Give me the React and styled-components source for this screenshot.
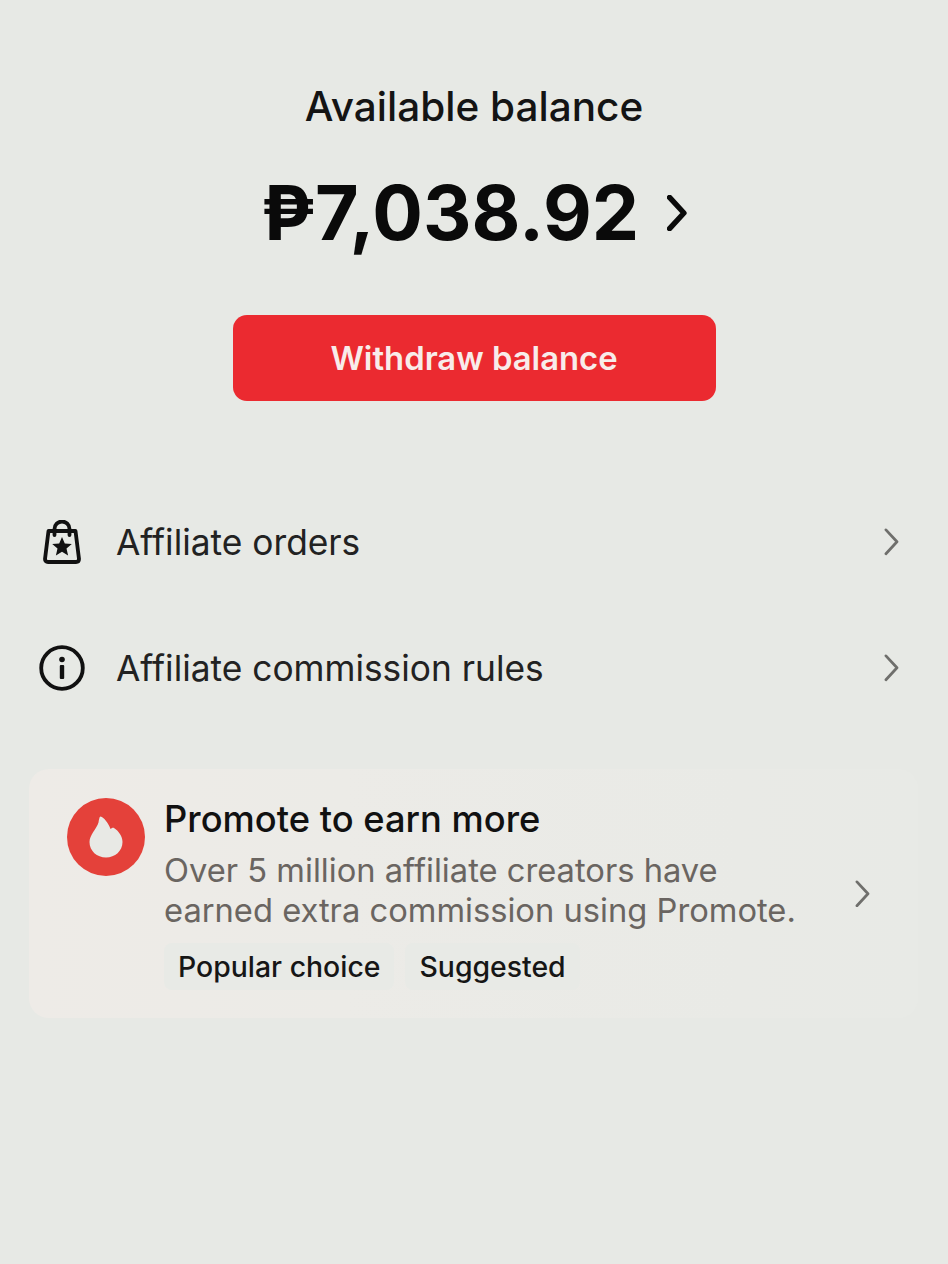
import React from 'react';
import styled, { createGlobalStyle } from 'styled-components';

const GlobalStyle = createGlobalStyle`
  html, body {
    margin: 0;
    padding: 0;
    background: #e7e9e5;
    font-family: Inter, "Liberation Sans", sans-serif;
  }
`;

const Page = styled.div`
  width: 948px;
  height: 1264px;
  box-sizing: border-box;
  padding-top: 84px;
  overflow: hidden;
  background: #e7e9e5;
  color: #111;
`;

const Header = styled.div`
  display: flex;
  flex-direction: column;
  align-items: center;
`;

const Label = styled.div`
  font-size: 40.5px;
  line-height: 46px;
  font-weight: 500;
  color: #141414;
`;

const BalanceRow = styled.div`
  display: flex;
  align-items: center;
  gap: 28px;
  margin-top: 41px;
  height: 84px;
`;

const Amount = styled.div`
  font-size: 75.2px;
  line-height: 84px;
  font-weight: 700;
  color: #0a0a0a;
`;

const WithdrawButton = styled.button`
  width: 483px;
  height: 86px;
  margin-top: 60px;
  border: none;
  border-radius: 14px;
  background: #eb2a30;
  color: #f8ecea;
  font-family: inherit;
  font-size: 32.8px;
  font-weight: 600;
`;

const Menu = styled.div`
  display: flex;
  flex-direction: column;
  margin-top: 78px;
`;

const MenuRow = styled.div`
  display: flex;
  align-items: center;
  height: 126px;
  padding: 0 49px 0 38px;
`;

const MenuIcon = styled.div`
  display: flex;
  align-items: center;
  justify-content: center;
  width: 48px;
  margin-right: 30px;
`;

const MenuText = styled.div`
  flex: 1;
  font-size: 35.3px;
  color: #222;
`;

const PromoCard = styled.div`
  display: flex;
  align-items: center;
  height: 249px;
  box-sizing: border-box;
  margin: 38px 30px 0 29px;
  padding: 0 48px 0 38px;
  border-radius: 20px;
  background: linear-gradient(90deg, #eeebe7 0%, #ecebe7 35%, #e9eae6 80%, #e8eae6 100%);
`;

const FlameBadge = styled.div`
  display: flex;
  align-items: center;
  justify-content: center;
  align-self: flex-start;
  flex-shrink: 0;
  width: 78px;
  height: 78px;
  margin-top: 29px;
  border-radius: 50%;
  background: #e4413a;
`;

const PromoBody = styled.div`
  flex: 1;
  margin-left: 19px;
`;

const PromoTitle = styled.div`
  font-size: 36.3px;
  line-height: 42px;
  font-weight: 500;
  color: #111;
`;

const PromoDesc = styled.div`
  margin-top: 10px;
  font-size: 32.7px;
  line-height: 40px;
  color: #6a6561;
  white-space: nowrap;
`;

const Tags = styled.div`
  display: flex;
  gap: 11px;
  margin-top: 13px;
`;

const Tag = styled.div`
  padding: 0 14px;
  height: 47px;
  line-height: 47px;
  border-radius: 8px;
  background: #e8eae6;
  font-size: 28.4px;
  font-weight: 500;
  color: #161616;
`;

const Chevron = ({ size = 23, color = '#6f6f6c', width = 3 }) => (
  <svg width={size * 0.65} height={size * 1.2} viewBox="0 0 16 30" fill="none">
    <path
      d="M2 2 L14 15 L2 28"
      stroke={color}
      strokeWidth={width}
      strokeLinecap="round"
      strokeLinejoin="round"
    />
  </svg>
);

const BagIcon = () => (
  <svg width="38" height="44" viewBox="0 0 38 44" fill="none">
    <path
      d="M5.5 11 H32.5 L36 39 Q36 42 33 42 H5 Q2 42 2 39 Z"
      stroke="#111"
      strokeWidth="3.8"
      strokeLinejoin="round"
    />
    <path
      d="M11.5 15 V9 A7.5 7.5 0 0 1 26.5 9 V15"
      stroke="#111"
      strokeWidth="3.8"
      strokeLinecap="round"
    />
    <path
      d="M19 17 L21.8 23.4 L28.8 24 L23.5 28.6 L25.1 35.4 L19 31.8 L12.9 35.4 L14.5 28.6 L9.2 24 L16.2 23.4 Z"
      fill="#111"
    />
  </svg>
);

const InfoIcon = () => (
  <svg width="46" height="46" viewBox="0 0 46 46" fill="none">
    <circle cx="23" cy="23" r="20.8" stroke="#111" strokeWidth="3.8" />
    <circle cx="23" cy="14.5" r="2.8" fill="#111" />
    <rect x="20.8" y="20" width="4.4" height="14" rx="1" fill="#111" />
  </svg>
);

const FlameIcon = () => (
  <svg width="34" height="42" viewBox="0 0 34 42" fill="#e8e9e5">
    <path d="M11.5 0.5 C15 1.5 19.5 7 21.5 13 C22.5 12.5 23.5 11.5 25 12 C29.5 15 33.5 20 33.5 26 C33.5 35 26 41.5 17 41.5 C8 41.5 0.5 35 0.5 26 C0.5 19 7.5 13 9.5 6.5 C10 3.5 10.5 0.5 11.5 0.5 Z" />
  </svg>
);

export default function App() {
  return (
    <Page>
      <GlobalStyle />
      <Header>
        <Label>Available balance</Label>
        <BalanceRow>
          <Amount>₱7,038.92</Amount>
          <Chevron size={30} color="#0a0a0a" width={4.5} />
        </BalanceRow>
        <WithdrawButton>Withdraw balance</WithdrawButton>
      </Header>
      <Menu>
        <MenuRow>
          <MenuIcon><BagIcon /></MenuIcon>
          <MenuText>Affiliate orders</MenuText>
          <Chevron />
        </MenuRow>
        <MenuRow>
          <MenuIcon><InfoIcon /></MenuIcon>
          <MenuText>Affiliate commission rules</MenuText>
          <Chevron />
        </MenuRow>
      </Menu>
      <PromoCard>
        <FlameBadge><FlameIcon /></FlameBadge>
        <PromoBody>
          <PromoTitle>Promote to earn more</PromoTitle>
          <PromoDesc>
            Over 5 million affiliate creators have
            <br />
            earned extra commission using Promote.
          </PromoDesc>
          <Tags>
            <Tag>Popular choice</Tag>
            <Tag>Suggested</Tag>
          </Tags>
        </PromoBody>
        <Chevron />
      </PromoCard>
    </Page>
  );
}
